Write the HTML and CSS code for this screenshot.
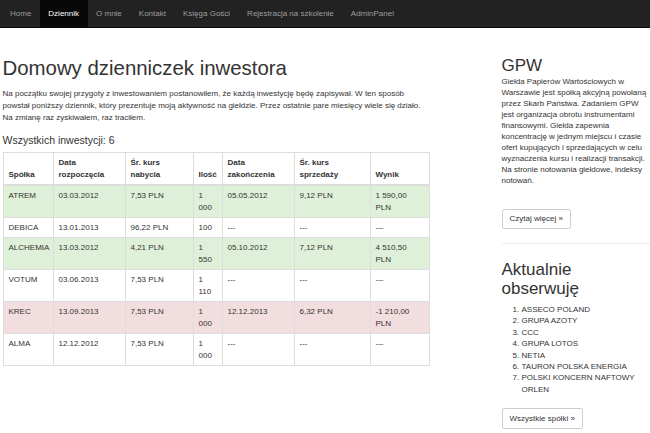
FILE: index.html
```html
<!DOCTYPE html>
<html lang="pl">
<head>
<meta charset="utf-8">
<title>Dziennik</title>
<link rel="stylesheet" href="styles.css">
</head>
<body>
<nav class="navbar">
  <ul class="nav">
    <li><a href="#">Home</a></li>
    <li class="active"><a href="#">Dziennik</a></li>
    <li><a href="#">O mnie</a></li>
    <li><a href="#">Kontakt</a></li>
    <li><a href="#">Księga Gości</a></li>
    <li><a href="#">Rejestracja na szkolenie</a></li>
    <li><a href="#">AdminPanel</a></li>
  </ul>
</nav>
<div class="row">
  <main class="main">
    <h1 class="title">Domowy dzienniczek inwestora</h1>
    <p class="lead-text">Na początku swojej przygoty z inwestowaniem postanowiłem, że każdą inwestycję będę zapisywał. W ten sposób powstał poniższy dziennik, który prezentuje moją aktywność na giełdzie. Przez ostatnie pare miesięcy wiele się działo. Na zmianę raz zyskiwałem, raz traciłem.</p>
    <h4 class="count">Wszystkich inwestycji: 6</h4>
    <table class="table">
      <thead>
        <tr>
          <th class="c1">Spółka</th>
          <th class="c2">Data rozpoczęcia</th>
          <th class="c3">Śr. kurs nabycia</th>
          <th class="c4">Ilość</th>
          <th class="c5">Data zakończenia</th>
          <th class="c6">Śr. kurs sprzedaży</th>
          <th class="c7">Wynik</th>
        </tr>
      </thead>
      <tbody>
        <tr class="success"><td>ATREM</td><td>03.03.2012</td><td>7,53 PLN</td><td>1 000</td><td>05.05.2012</td><td>9,12 PLN</td><td>1 590,00 PLN</td></tr>
        <tr><td>DEBICA</td><td>13.01.2013</td><td>96,22 PLN</td><td>100</td><td>---</td><td>---</td><td>---</td></tr>
        <tr class="success"><td>ALCHEMIA</td><td>13.03.2012</td><td>4,21 PLN</td><td>1 550</td><td>05.10.2012</td><td>7,12 PLN</td><td>4 510,50 PLN</td></tr>
        <tr><td>VOTUM</td><td>03.06.2013</td><td>7,53 PLN</td><td>1 110</td><td>---</td><td>---</td><td>---</td></tr>
        <tr class="danger"><td>KREC</td><td>13.09.2013</td><td>7,53 PLN</td><td>1 000</td><td>12.12.2013</td><td>6,32 PLN</td><td>-1 210,00 PLN</td></tr>
        <tr><td>ALMA</td><td>12.12.2012</td><td>7,53 PLN</td><td>1 000</td><td>---</td><td>---</td><td>---</td></tr>
      </tbody>
    </table>
  </main>
  <aside class="side">
    <h2 class="side-title">GPW</h2>
    <p class="side-text">Giełda Papierów Wartościowych w Warszawie jest spółką akcyjną powołaną przez Skarb Państwa. Zadaniem GPW jest organizacja obrotu instrumentami finansowymi. Giełda zapewnia koncentrację w jednym miejscu i czasie ofert kupujących i sprzedających w celu wyznaczenia kursu i realizacji transakcji. Na stronie notowania giełdowe, indeksy notowań.</p>
    <p class="btn-wrap"><a class="btn" href="#">Czytaj więcej »</a></p>
    <hr class="divider">
    <h2 class="side-title two">Aktualnie obserwuję</h2>
    <ol class="watch">
      <li>ASSECO POLAND</li>
      <li>GRUPA AZOTY</li>
      <li>CCC</li>
      <li>GRUPA LOTOS</li>
      <li>NETIA</li>
      <li>TAURON POLSKA ENERGIA</li>
      <li>POLSKI KONCERN NAFTOWY ORLEN</li>
    </ol>
    <p class="btn-wrap last"><a class="btn" href="#">Wszystkie spółki »</a></p>
  </aside>
</div>
</body>
</html>
```

FILE: styles.css
```css
* { box-sizing: border-box; }
html, body {
  margin: 0;
  padding: 0;
  background: #fff;
  overflow: hidden;
}
body {
  font-family: "Liberation Sans", Arial, sans-serif;
  font-size: 8px;
  line-height: 11.4px;
  color: #333;
  width: 650px;
  height: 433px;
}
.navbar {
  height: 28px;
  background: #222;
  border-bottom: 1px solid #080808;
  padding-left: 1.5px;
}
.nav {
  list-style: none;
  margin: 0;
  padding: 0;
  display: flex;
  height: 27px;
}
.nav li a {
  display: block;
  padding: 0 8.5px;
  line-height: 27px;
  color: #9d9d9d;
  text-decoration: none;
}
.nav li.active a {
  background: #080808;
  color: #fff;
}
.row {
  display: flex;
  gap: 73px;
  padding: 29px 0 0 2.5px;
}
.main {
  width: 426px;
  flex: none;
}
.title {
  font-size: 20.4px;
  line-height: 22.4px;
  font-weight: 500;
  margin: 0 0 8.5px;
  color: #333;
}
.lead-text {
  margin: 0 0 11px;
  line-height: 12px;
}
.count {
  font-size: 10.5px;
  line-height: 11.6px;
  font-weight: 500;
  margin: 0 0 5.5px;
}
.table {
  width: 426px;
  table-layout: fixed;
  border-collapse: collapse;
  border: 1px solid #ddd;
}
.table th, .table td {
  border: 1px solid #ddd;
  padding: 3.5px 5px;
  line-height: 12px;
  text-align: left;
  vertical-align: top;
}
.table th {
  vertical-align: bottom;
  border-bottom: 2px solid #ddd;
  font-weight: bold;
}
.c1 { width: 50px; }
.c2 { width: 72px; }
.c3 { width: 68px; }
.c4 { width: 29px; }
.c5 { width: 72px; }
.c6 { width: 76px; }
.c7 { width: 59px; }
.success td { background: #dff0d8; }
.danger td { background: #f2dede; }
.side {
  width: 149px;
  flex: none;
}
.side-title {
  font-size: 17px;
  line-height: 18.7px;
  font-weight: 500;
  margin: 0;
  color: #333;
}
.side-text {
  margin: 0;
  line-height: 11px;
}
.btn-wrap {
  margin: 23px 0 0;
}
.btn {
  display: inline-block;
  padding: 3.5px 7px;
  border: 1px solid #ccc;
  border-radius: 2.5px;
  color: #333;
  text-decoration: none;
  line-height: 11.4px;
  background: #fff;
}
.divider {
  border: 0;
  border-top: 1px solid #eee;
  margin: 14px 0 0;
}
.side-title.two {
  margin-top: 17px;
}
.watch {
  margin: 5.5px 0 0;
  padding-left: 20px;
}
.btn-wrap.last {
  margin-top: 13px;
}
```
